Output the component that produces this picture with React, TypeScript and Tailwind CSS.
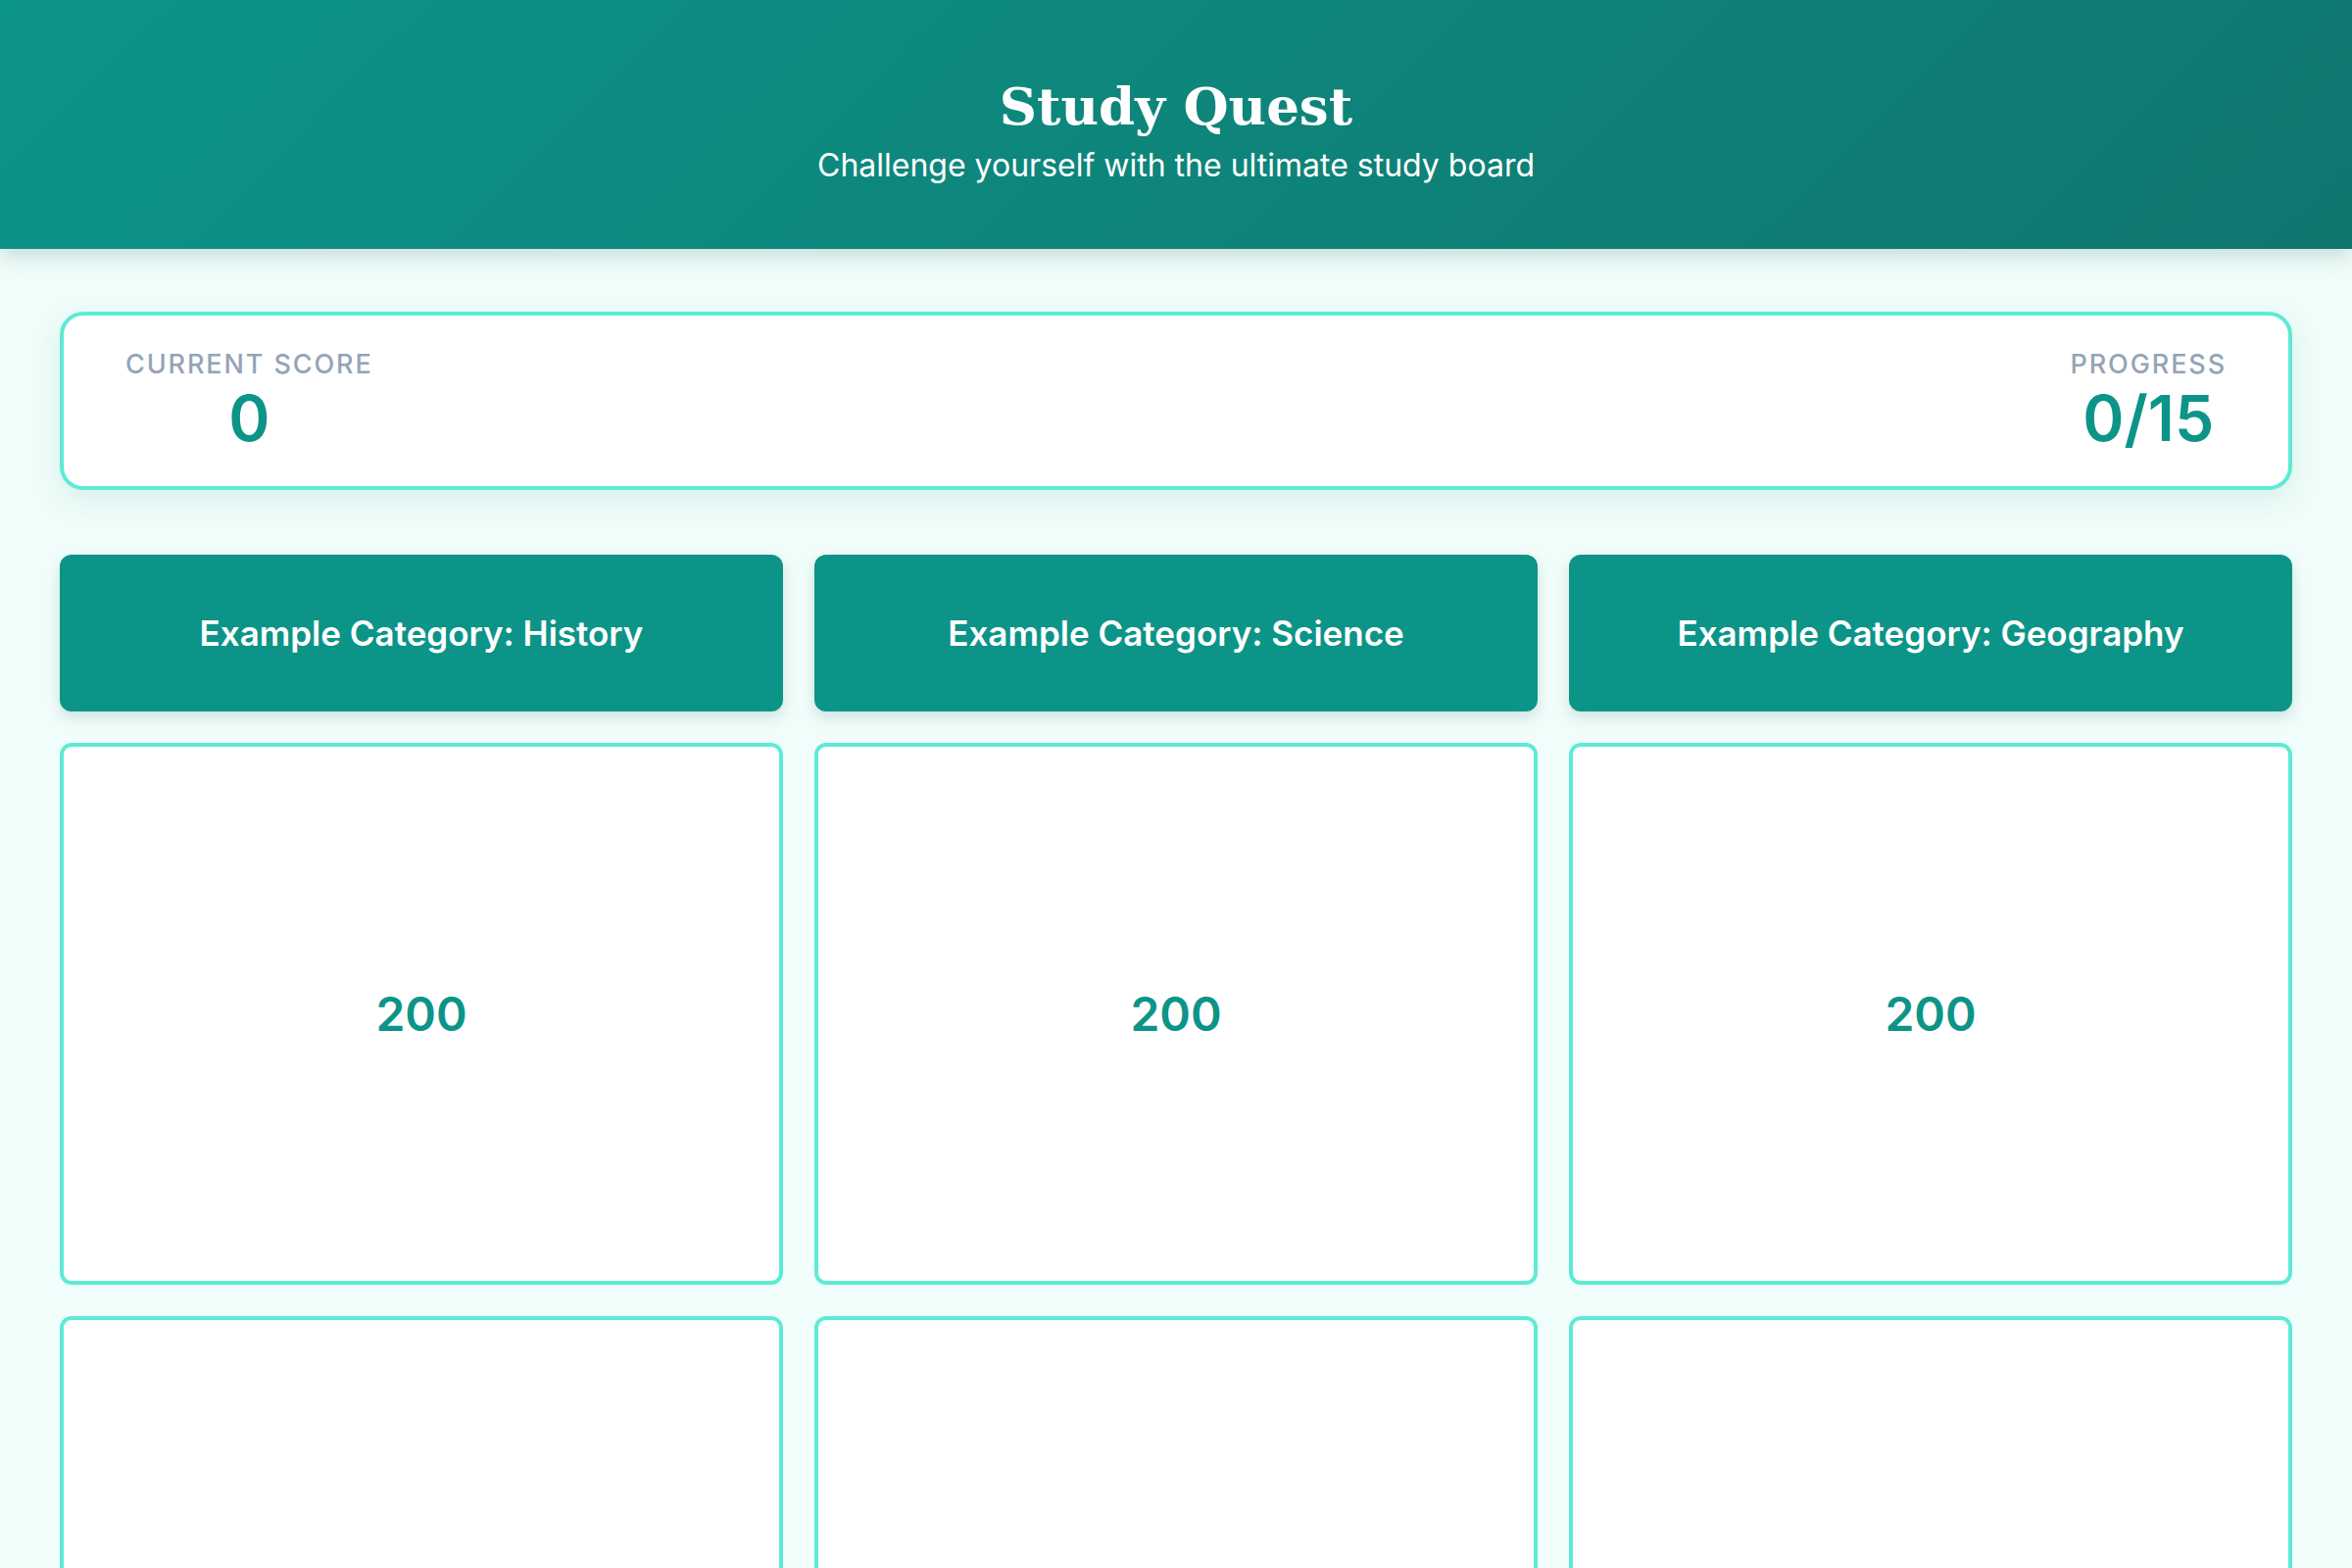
import React from "react";

const categories = [
  "Example Category: History",
  "Example Category: Science",
  "Example Category: Geography",
];

const rows = [200, 400];

export default function App() {
  return (
    <div className="min-h-screen bg-[#f0fdfa] font-['Inter','Noto_Sans',sans-serif]">
      <header className="relative z-10 h-[254px] bg-[linear-gradient(135deg,#0d9488_0%,#0f766e_100%)] pt-[76px] text-center text-white shadow-[0_8px_20px_rgba(15,80,75,0.18)]">
        <h1 className="font-['DejaVu_Serif','Liberation_Serif',serif] text-[53px] font-bold leading-[64px]">
          Study Quest
        </h1>
        <p className="mt-[5px] text-[32px] leading-[47px] font-normal">
          Challenge yourself with the ultimate study board
        </p>
      </header>

      <main className="px-[61px] pt-[64px]">
        <section className="flex items-start justify-between rounded-[24px] border-[4px] border-[#5eead4] bg-white px-[63px] pt-[30px] pb-[36px] shadow-[0_10px_30px_rgba(15,118,110,0.10)]">
          <div className="flex flex-col items-center">
            <div className="text-[27px] font-medium uppercase leading-[40px] tracking-[0.07em] text-[#94a3b8]">
              Current Score
            </div>
            <div className="mt-[2px] text-[64px] font-semibold leading-[66px] text-[#0d9488]">0</div>
          </div>
          <div className="flex flex-col items-center">
            <div className="text-[27px] font-medium uppercase leading-[40px] tracking-[0.07em] text-[#94a3b8]">
              Progress
            </div>
            <div className="mt-[2px] text-[64px] font-semibold leading-[66px] text-[#0d9488]">0/15</div>
          </div>
        </section>

        <section className="mt-[66px] grid grid-cols-3 gap-[32px]">
          {categories.map((c) => (
            <div
              key={c}
              className="flex h-[160px] items-center justify-center rounded-[12px] bg-[#0d9488] text-[35px] font-semibold text-white shadow-[0_6px_14px_rgba(15,80,75,0.15)]"
            >
              {c}
            </div>
          ))}
          {rows.map((v, ri) =>
            categories.map((c) => (
              <button
                key={c + v}
                className="flex h-[553px] items-center justify-center rounded-[12px] border-[4px] border-[#5eead4] bg-white text-[48px] font-semibold text-[#0d9488]"
              >
                {ri === 0 ? v : ""}
              </button>
            ))
          )}
        </section>
      </main>
    </div>
  );
}
